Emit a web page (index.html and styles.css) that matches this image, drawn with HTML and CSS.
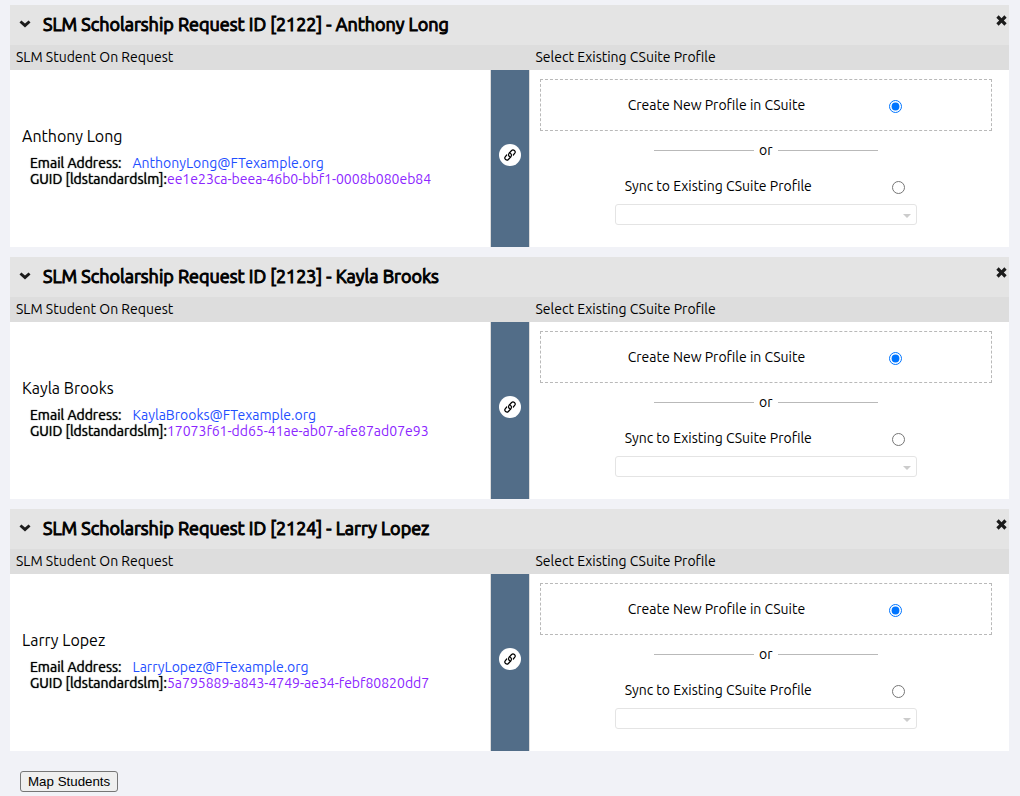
FILE: index.html
```html
<!DOCTYPE html>
<html lang="en">
<head>
<meta charset="utf-8">
<title>Map Students</title>
<link rel="stylesheet" href="styles.css">
</head>
<body>
<svg class="sprite" aria-hidden="true">
  <symbol id="chevron" viewBox="0 0 12 8"><path d="M0.5 2.4 2.4 0.5 6 3.6 9.6 0.5 11.5 2.4 6 7.4Z"/></symbol>
  <symbol id="cross" viewBox="0 0 10 10"><path d="M2.4 0.3 5 2.9 7.6 0.3 9.7 2.4 7.1 5 9.7 7.6 7.6 9.7 5 7.1 2.4 9.7 0.3 7.6 2.9 5 0.3 2.4Z"/></symbol>
  <symbol id="link" viewBox="0 0 12 12"><g fill="none" stroke="currentColor" stroke-width="1.2" stroke-linecap="round" stroke-linejoin="round"><path d="M6.6 8.2C4.6 7.6 4 5.6 5.2 4.2L7.6 1.5C9.4 -0.2 12.2 2.2 10.8 4.2L9.3 6"/><path d="M5.4 3.8C7.4 4.4 8 6.4 6.8 7.8L4.4 10.5C2.6 12.2 -0.2 9.8 1.2 7.8L2.7 6"/></g></symbol>
</svg>
<form class="page">
  <section class="request">
    <header class="request-head">
      <button class="icon-button" type="button" aria-label="Collapse"><svg class="chevron"><use href="#chevron"/></svg></button>
      <h2 class="title">SLM Scholarship Request ID [2122] - Anthony Long</h2>
      <button class="icon-button close" type="button" aria-label="Remove"><svg class="cross"><use href="#cross"/></svg></button>
    </header>
    <div class="columns labels"><span>SLM Student On Request</span><span></span><span>Select Existing CSuite Profile</span></div>
    <div class="columns content">
      <div class="student">
        <p class="name">Anthony Long</p>
        <p class="detail"><b class="key spaced">Email Address:</b><a class="email" href="#">AnthonyLong@FTexample.org</a></p>
        <p class="detail"><b class="key">GUID [ldstandardslm]:</b><span class="guid">ee1e23ca-beea-46b0-bbf1-0008b080eb84</span></p>
      </div>
      <div class="bridge"><span class="badge"><svg class="link"><use href="#link"/></svg></span></div>
      <div class="profile">
        <div class="create"><div class="option"><label for="new-2122">Create New Profile in CSuite</label><input class="radio" type="radio" id="new-2122" name="map-2122" checked></div></div>
        <div class="or">or</div>
        <div class="option sync"><label for="sync-2122">Sync to Existing CSuite Profile</label><input class="radio" type="radio" id="sync-2122" name="map-2122"></div>
        <div class="picker"><select class="select" aria-label="Existing CSuite profile" disabled><option></option></select></div>
      </div>
    </div>
  </section>
  <section class="request">
    <header class="request-head">
      <button class="icon-button" type="button" aria-label="Collapse"><svg class="chevron"><use href="#chevron"/></svg></button>
      <h2 class="title">SLM Scholarship Request ID [2123] - Kayla Brooks</h2>
      <button class="icon-button close" type="button" aria-label="Remove"><svg class="cross"><use href="#cross"/></svg></button>
    </header>
    <div class="columns labels"><span>SLM Student On Request</span><span></span><span>Select Existing CSuite Profile</span></div>
    <div class="columns content">
      <div class="student">
        <p class="name">Kayla Brooks</p>
        <p class="detail"><b class="key spaced">Email Address:</b><a class="email" href="#">KaylaBrooks@FTexample.org</a></p>
        <p class="detail"><b class="key">GUID [ldstandardslm]:</b><span class="guid">17073f61-dd65-41ae-ab07-afe87ad07e93</span></p>
      </div>
      <div class="bridge"><span class="badge"><svg class="link"><use href="#link"/></svg></span></div>
      <div class="profile">
        <div class="create"><div class="option"><label for="new-2123">Create New Profile in CSuite</label><input class="radio" type="radio" id="new-2123" name="map-2123" checked></div></div>
        <div class="or">or</div>
        <div class="option sync"><label for="sync-2123">Sync to Existing CSuite Profile</label><input class="radio" type="radio" id="sync-2123" name="map-2123"></div>
        <div class="picker"><select class="select" aria-label="Existing CSuite profile" disabled><option></option></select></div>
      </div>
    </div>
  </section>
  <section class="request">
    <header class="request-head">
      <button class="icon-button" type="button" aria-label="Collapse"><svg class="chevron"><use href="#chevron"/></svg></button>
      <h2 class="title">SLM Scholarship Request ID [2124] - Larry Lopez</h2>
      <button class="icon-button close" type="button" aria-label="Remove"><svg class="cross"><use href="#cross"/></svg></button>
    </header>
    <div class="columns labels"><span>SLM Student On Request</span><span></span><span>Select Existing CSuite Profile</span></div>
    <div class="columns content">
      <div class="student">
        <p class="name">Larry Lopez</p>
        <p class="detail"><b class="key spaced">Email Address:</b><a class="email" href="#">LarryLopez@FTexample.org</a></p>
        <p class="detail"><b class="key">GUID [ldstandardslm]:</b><span class="guid">5a795889-a843-4749-ae34-febf80820dd7</span></p>
      </div>
      <div class="bridge"><span class="badge"><svg class="link"><use href="#link"/></svg></span></div>
      <div class="profile">
        <div class="create"><div class="option"><label for="new-2124">Create New Profile in CSuite</label><input class="radio" type="radio" id="new-2124" name="map-2124" checked></div></div>
        <div class="or">or</div>
        <div class="option sync"><label for="sync-2124">Sync to Existing CSuite Profile</label><input class="radio" type="radio" id="sync-2124" name="map-2124"></div>
        <div class="picker"><select class="select" aria-label="Existing CSuite profile" disabled><option></option></select></div>
      </div>
    </div>
  </section>
  <button class="submit" type="button">Map Students</button>
</form>
</body>
</html>
```

FILE: styles.css
```css
* { box-sizing: border-box; }
body {
  margin: 0;
  background: #f1f2f7;
  color: #000;
  font: 14px/20px Ubuntu, "Noto Sans", sans-serif;
}
.sprite { display: none; }
.page { padding: 5px 11px 4px 10px; }
.request { margin-bottom: 10px; }
.request-head {
  display: flex;
  align-items: center;
  height: 40px;
  padding: 0 2px 3px 9px;
  background: #e4e4e4;
}
.icon-button {
  display: flex;
  padding: 0;
  border: 0;
  background: none;
  color: #1b1b1b;
  fill: currentColor;
}
.chevron { width: 12px; height: 8px; }
.cross { width: 11px; height: 11px; }
.close { align-self: flex-start; margin: 10px 0 0 auto; }
.title {
  margin: 0 0 0 12px;
  font-size: 18px;
  line-height: 24px;
  font-weight: 400;
  -webkit-text-stroke: 1px #000;
}
.columns {
  display: grid;
  grid-template-columns: minmax(0, 12fr) 40px minmax(0, 12fr);
}
.labels { background: #ddd; line-height: 25px; }
.labels span { padding-left: 6px; }
.content { min-height: 177px; background: #fff; }
.student {
  display: flex;
  flex-direction: column;
  justify-content: center;
  padding: 0 12px 4px;
}
.name { margin: 0 0 9px; font-size: 16px; }
.detail { margin: 0 0 0 8px; line-height: 16px; }
.key { font-weight: 400; text-shadow: 0 0 1px #000; }
.spaced { margin-right: 11px; }
.email { color: #1f4fff; text-decoration: none; }
.guid { color: #8c26ff; }
.bridge {
  display: flex;
  justify-content: center;
  align-items: center;
  padding-bottom: 7px;
  border: solid #ddd;
  border-width: 0 1px;
  background: #526d88;
}
.badge {
  display: flex;
  justify-content: center;
  align-items: center;
  width: 22px;
  height: 22px;
  border-radius: 50%;
  background: #fff;
}
.link { width: 12px; height: 12px; }
.profile { padding: 9px 17px 22px 10px; }
.create { padding: 15px 0; border: 1px dashed #b9b9b9; }
.option {
  display: flex;
  justify-content: space-between;
  align-items: center;
  width: 302px;
  max-width: 100%;
  margin: 0 auto;
  padding: 0 15px 0 13px;
}
.radio { width: 13px; height: 13px; margin: 2px 0 0; }
.or {
  display: flex;
  justify-content: center;
  align-items: center;
  gap: 5px;
  margin-top: 9px;
}
.or::before, .or::after {
  content: "";
  width: 100px;
  border-top: 1px solid #b9b9b9;
}
.sync { margin-top: 16px; padding: 0 12px 0 10px; }
.picker { position: relative; width: 302px; max-width: 100%; margin: 8px auto 0; }
.picker::after {
  content: "";
  position: absolute;
  right: 6px;
  top: 10px;
  border: solid transparent;
  border-width: 4px 4px 0;
  border-top-color: #ccc;
}
.select {
  display: block;
  appearance: none;
  width: 100%;
  height: 21px;
  border: 1px solid #e4e4e4;
  border-radius: 3px;
  background: #fff;
  opacity: 1;
}
.submit {
  display: block;
  height: 21px;
  margin: 20px 0 0 10px;
  padding: 0 7px;
  border: 1px solid #767676;
  border-radius: 3px;
  background: #efefef;
  color: #000;
  font-family: "Liberation Sans", sans-serif;
}
```
